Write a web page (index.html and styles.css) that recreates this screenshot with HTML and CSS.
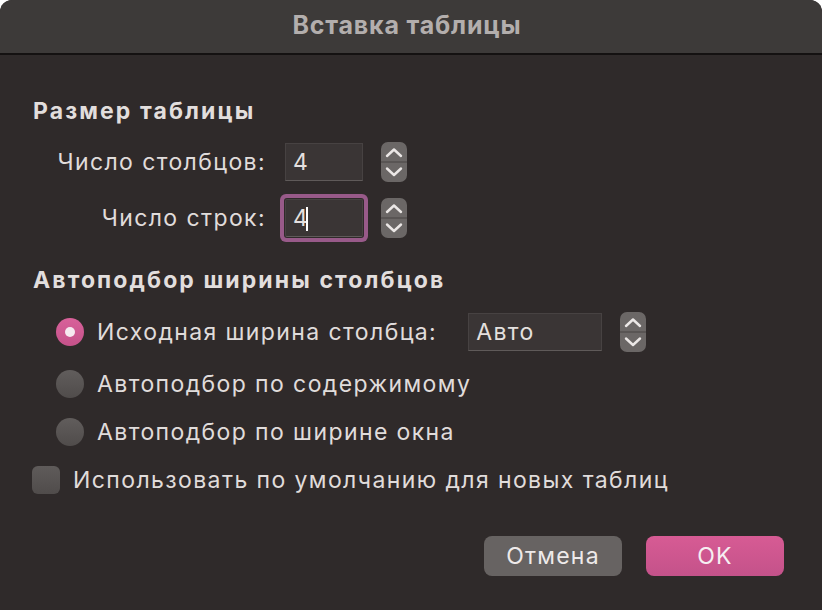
FILE: index.html
```
<!DOCTYPE html>
<html lang="ru">
<head>
	<meta charset="UTF-8">
	<title>Вставка таблицы</title>
	<link rel="stylesheet" href="styles.css">
</head>
<body>
	<div class="window">
		<div class="titlebar">Вставка таблицы</div>
		<div class="content">
			<h2 class="section first">Размер таблицы</h2>
			<div class="size-grid">
				<label class="size-label">Число столбцов:</label>
				<div class="field small"><span>4</span></div>
				<div class="stepper">
					<svg width="26" height="40" viewBox="0 0 26 40"><path d="M6 14 L13 7.5 L20 14" /><path d="M6 26.5 L13 33 L20 26.5" /></svg>
				</div>

				<label class="size-label">Число строк:</label>
				<div class="field small focused"><span>4</span><i class="caret"></i></div>
				<div class="stepper">
					<svg width="26" height="40" viewBox="0 0 26 40"><path d="M6 14 L13 7.5 L20 14" /><path d="M6 26.5 L13 33 L20 26.5" /></svg>
				</div>
			</div>

			<h2 class="section">Автоподбор ширины столбцов</h2>
			<div class="options">
				<div class="option">
					<span class="radio on"></span>
					<span class="option-text">Исходная ширина столбца:</span>
					<div class="field wide"><span>Авто</span></div>
					<div class="stepper">
						<svg width="26" height="40" viewBox="0 0 26 40"><path d="M6 14 L13 7.5 L20 14" /><path d="M6 26.5 L13 33 L20 26.5" /></svg>
					</div>
				</div>
				<div class="option second">
					<span class="radio"></span>
					<span class="option-text">Автоподбор по содержимому</span>
				</div>
				<div class="option third">
					<span class="radio"></span>
					<span class="option-text">Автоподбор по ширине окна</span>
				</div>
			</div>

			<div class="check-row">
				<span class="checkbox"></span>
				<span class="option-text">Использовать по умолчанию для новых таблиц</span>
			</div>

			<div class="buttons">
				<button class="btn cancel">Отмена</button>
				<button class="btn ok">OK</button>
			</div>
		</div>
	</div>
</body>
</html>
```
FILE: styles.css
```
body {
	margin: 0;
	background-color: #fff;
	font-family: "Inter", "Noto Sans", sans-serif;
}
.window {
	width: 822px;
	height: 610px;
	background-color: #2f2a2a;
	border-radius: 12px 12px 0 0;
	overflow: hidden;
	color: #e0dcdb;
}
.titlebar {
	height: 53px;
	line-height: 50px;
	background-color: #3d3a39;
	border-bottom: 2px solid #141111;
	text-align: center;
	font-size: 25px;
	font-weight: 700;
	letter-spacing: 0.8px;
	color: #b3aead;
	padding-right: 8px;
}
.content {
	padding: 0 0 0 32px;
}
.section {
	margin: 28px 0 0 1px;
	font-size: 23px;
	font-weight: 700;
	line-height: 28px;
	color: #e2dedd;
	letter-spacing: 2.1px;
}
.section.first {
	margin-top: 42px;
}
.size-grid {
	display: grid;
	grid-template-columns: 233px 78px 26px;
	grid-template-rows: 40px 40px;
	column-gap: 20px;
	row-gap: 16px;
	align-items: center;
	margin-top: 17px;
}
.size-grid .stepper {
	margin-left: -2px;
}
.size-label {
	text-align: right;
	font-size: 23px;
	letter-spacing: 1.4px;
	margin-right: -1px;
}
.field {
	box-sizing: border-box;
	height: 38px;
	background-color: #3a3535;
	border: 1px solid #474242;
	border-bottom: 1px solid #5f5a59;
	font-size: 23px;
	letter-spacing: 1.4px;
	line-height: 36px;
	padding-left: 7px;
	color: #e4e0df;
	position: relative;
}
.field.small {
	width: 78px;
}
.field.focused {
	box-shadow: 0 0 0 1px #2f2a2a, 0 0 0 5px #985a89;
	border-radius: 2px;
}
.caret {
	position: absolute;
	left: 20px;
	top: 7px;
	width: 2px;
	height: 24px;
	background-color: #fff;
}
.field.wide {
	width: 134px;
	margin-left: 31px;
	padding-left: 7px;
}
.stepper {
	width: 26px;
	height: 40px;
	border-radius: 7px;
	background: linear-gradient(#6b6766 0, #6b6766 19px, #595554 19px, #595554 21px, #6b6766 21px);
}
.stepper svg {
	display: block;
}
.stepper path {
	fill: none;
	stroke: #ebe7e6;
	stroke-width: 2.4;
	stroke-linecap: round;
	stroke-linejoin: round;
}
.options {
	margin: 18px 0 0 24px;
}
.option {
	display: flex;
	align-items: center;
	height: 40px;
}
.option .stepper {
	margin-left: 18px;
}
.option.second {
	margin-top: 12px;
}
.option.third {
	margin-top: 8px;
}
.option-text {
	font-size: 23px;
	letter-spacing: 1.4px;
}
.radio {
	width: 28px;
	height: 28px;
	border-radius: 50%;
	background: linear-gradient(#615d5c, #504c4b);
	margin-right: 13px;
	position: relative;
	flex-shrink: 0;
}
.radio.on {
	background: linear-gradient(#d8619a, #c5528a);
}
.radio.on::after {
	content: "";
	position: absolute;
	left: 9px;
	top: 9px;
	width: 10px;
	height: 10px;
	border-radius: 50%;
	background-color: #f6e9f0;
}
.check-row {
	display: flex;
	align-items: center;
	height: 40px;
	margin-top: 8px;
}
.checkbox {
	width: 28px;
	height: 28px;
	border-radius: 6px;
	background: linear-gradient(#5f5b5a, #504c4b);
	margin-right: 13px;
}
.buttons {
	display: flex;
	justify-content: flex-end;
	gap: 24px;
	margin-top: 36px;
	padding-right: 38px;
}
.btn {
	width: 138px;
	height: 40px;
	border: none;
	border-radius: 8px;
	font-family: inherit;
	font-size: 23px;
	letter-spacing: 1.2px;
	color: #eeeaea;
	padding: 0;
}
.btn.cancel {
	background-color: #676362;
}
.btn.ok {
	background: linear-gradient(#d75b94, #c4528a);
	color: #f6eef2;
}
```
